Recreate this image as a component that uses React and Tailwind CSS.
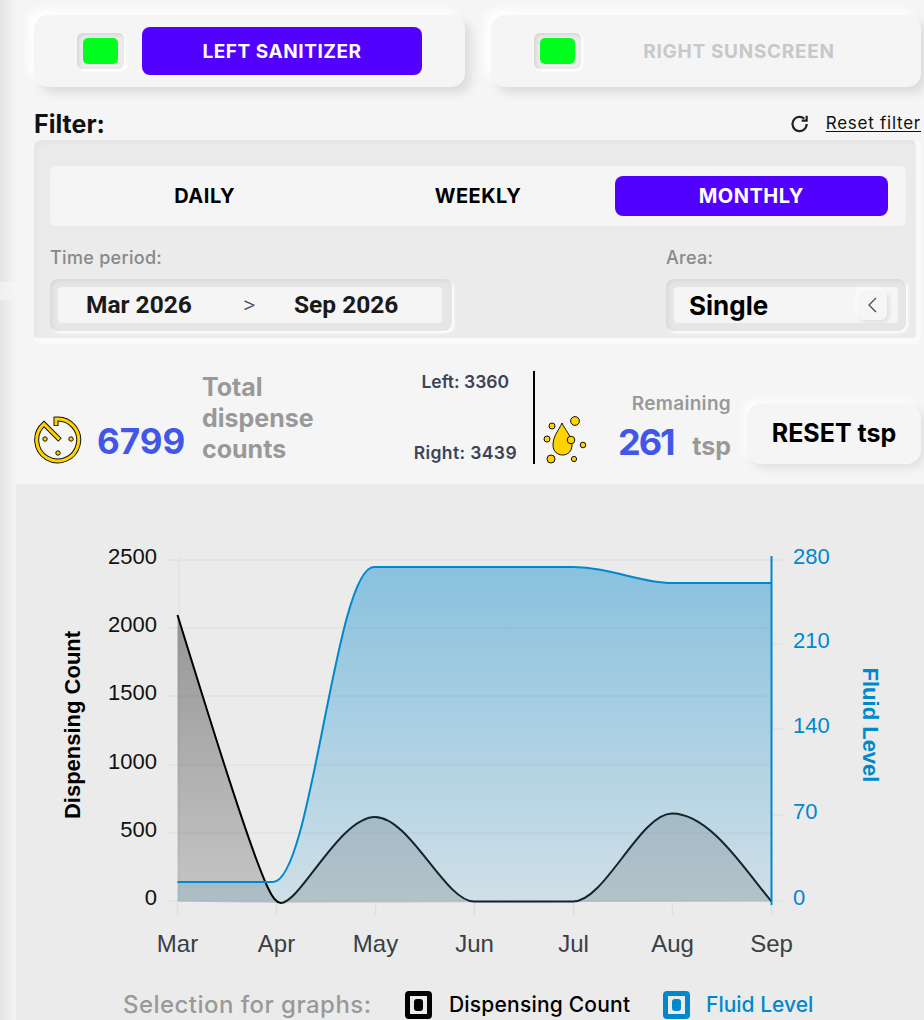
import React from 'react';

const mont = "font-['Inter','Liberation_Sans',sans-serif]";

const leftTicks = [['2500', 560], ['2000', 628], ['1500', 696], ['1000', 765], ['500', 833], ['0', 901]];
const rightTicks = [['280', 560], ['210', 644], ['140', 729], ['70', 815], ['0', 901]];
const months = ['Mar', 'Apr', 'May', 'Jun', 'Jul', 'Aug', 'Sep'];

const blueLine = 'M177.5 882 L273 882 C312 882 335 567 374 567 L573 567 C610 567 640 583 672 583 L771.5 583';
const dropLine = 'M177.5 615 C210 720 250 850 268 888 C273 899 277 903 281 903';
const humpLine = 'M281 903 C300 903 340 817 375 817 C410 817 445 901.5 474 901.5 L573 901.5 C605 901.5 640 813.5 672 813.5 C710 813.5 745 870 771.5 901.5';

function Chart() {
  return (
    <svg width="908" height="490" viewBox="16 484 908 490" className="block">
      <defs>
        <linearGradient id="blueFill" x1="0" y1="567" x2="0" y2="901" gradientUnits="userSpaceOnUse">
          <stop offset="0" stopColor="#0088cc" stopOpacity="0.42" />
          <stop offset="1" stopColor="#0088cc" stopOpacity="0.12" />
        </linearGradient>
        <linearGradient id="blackFill" x1="0" y1="615" x2="0" y2="901" gradientUnits="userSpaceOnUse">
          <stop offset="0" stopColor="#000000" stopOpacity="0.36" />
          <stop offset="1" stopColor="#000000" stopOpacity="0.16" />
        </linearGradient>
      </defs>

      {leftTicks.map(([label, y]) => (
        <g key={label}>
          <line x1="168" x2="771" y1={y} y2={y} stroke="#e2e2e2" strokeWidth="1.5" />
          <text x="157" y={y + 4} textAnchor="end" fontSize="22" fill="#111" fontFamily="Liberation Sans">{label}</text>
        </g>
      ))}
      <line x1="179" x2="179" y1="556" y2="902" stroke="#e2e2e2" strokeWidth="1.5" />
      {months.map((m, i) => (
        <g key={m}>
          <line x1={177.5 + i * 99} x2={177.5 + i * 99} y1="903" y2="915" stroke="#dedede" strokeWidth="1.5" />
          <text x={177.5 + i * 99} y="952" textAnchor="middle" fontSize="24" fill="#3a3f42" fontFamily="Liberation Sans">{m}</text>
        </g>
      ))}

      <path d={`${dropLine} L177.5 901.5 Z`} fill="url(#blackFill)" />
      <path d={`${blueLine} L771.5 901.5 L177.5 901.5 Z`} fill="url(#blueFill)" />
      <path d={`${humpLine} Z`} fill="#000000" fillOpacity="0.13" />
      <path d={dropLine} fill="none" stroke="#000000" strokeWidth="2" />
      <path d={humpLine} fill="none" stroke="#14232c" strokeWidth="2" />
      <path d={blueLine} fill="none" stroke="#0088cc" strokeWidth="2" />

      <line x1="771.5" x2="771.5" y1="556" y2="905" stroke="#0088cc" strokeWidth="2" />
      {rightTicks.map(([label, y]) => (
        <g key={label}>
          <line x1="773" x2="783" y1={y} y2={y} stroke="#e2e2e2" strokeWidth="1.5" />
          <text x="793" y={y + 4} fontSize="22" fill="#0088cc" fontFamily="Liberation Sans">{label}</text>
        </g>
      ))}

      <text transform="translate(80 725) rotate(-90)" textAnchor="middle" fontSize="22" fontWeight="700" fill="#000" fontFamily="Liberation Sans">Dispensing Count</text>
      <text transform="translate(863 725) rotate(90)" textAnchor="middle" fontSize="22" fontWeight="700" fill="#0088cc" fontFamily="Liberation Sans">Fluid Level</text>
    </svg>
  );
}

function DialIcon() {
  const arc = 'M22 10 L22 3 A21 21 0 1 1 10 8 L26 24';
  return (
    <svg width="48" height="48" viewBox="0 0 48 48" fill="none">
      <path d={arc} stroke="#111" strokeWidth="5" />
      <path d="M22 9.2 L22 3 A21 21 0 1 1 10 8 L25.4 23.4" stroke="#ffd200" strokeWidth="3" />
      <circle cx="11" cy="23" r="2.2" fill="#ffd200" stroke="#111" strokeWidth="1" />
      <circle cx="37" cy="23" r="2.2" fill="#ffd200" stroke="#111" strokeWidth="1" />
      <circle cx="24" cy="37" r="2.2" fill="#ffd200" stroke="#111" strokeWidth="1" />
    </svg>
  );
}

function DropIcon() {
  return (
    <svg width="44" height="48" viewBox="0 0 44 48" fill="none" stroke="#111" strokeWidth="1">
      <path d="M19 7 C16 14 10 20 10 29 C10 35 14 39 19.5 39 C25 39 29 35 29 29 C29 20 22 14 19 7 Z" fill="#ffd200" />
      <circle cx="32" cy="5" r="4.4" fill="#ffd200" />
      <circle cx="9" cy="10" r="3" fill="#ffd200" />
      <circle cx="4" cy="23" r="3" fill="#ffd200" />
      <circle cx="28" cy="24" r="3.8" fill="#ffd200" />
      <circle cx="40" cy="29" r="2.8" fill="#ffd200" />
      <circle cx="8" cy="43" r="4" fill="#ffd200" />
      <circle cx="31" cy="43" r="2.6" fill="#ffd200" />
    </svg>
  );
}

function Lamp() {
  return (
    <div className="flex h-[36px] w-[47px] items-center justify-center rounded-[6px] bg-[#ececec] shadow-[inset_2px_2px_4px_#d4d4d4,2px_2px_4px_#ffffff]">
      <div className="h-[26px] w-[35px] rounded-[5px] bg-[#00ff1e]" />
    </div>
  );
}

function LegendBox({ color }) {
  return (
    <div className="flex h-[28px] w-[27px] items-center justify-center rounded-[4px] border-[5px] bg-[#ebebeb]" style={{ borderColor: color }}>
      <div className="h-[12px] w-[9px] rounded-[3px]" style={{ background: color }} />
    </div>
  );
}

export default function App() {
  return (
    <div className={`flex h-[1020px] w-[924px] overflow-hidden bg-[#f5f5f5] ${mont}`}>
      <div className="flex w-[16px] shrink-0 flex-col">
        <div className="h-[282px] bg-gradient-to-r from-[#e4e4e4] to-[#f5f5f5]" />
        <div className="h-[18px] bg-gradient-to-r from-[#f0f0f0] to-[#f5f5f5]" />
        <div className="flex-1 bg-gradient-to-r from-[#e4e4e4] to-[#f5f5f5]" />
      </div>

      <div className="flex min-w-0 flex-1 flex-col">
        <div className="flex gap-[26px] pl-[18px] pr-[3px] pt-[15px]">
          <div className="flex h-[72px] w-[431px] items-center rounded-[14px] bg-[#f5f5f5] pl-[43px] shadow-[6px_6px_10px_#dcdcdc,-6px_-6px_10px_#ffffff]">
            <Lamp />
            <button className="ml-[18px] h-[48px] w-[280px] rounded-[8px] bg-[#5200ff] pt-[2px] text-[19px] font-bold tracking-[0.55px] text-white">LEFT SANITIZER</button>
          </div>
          <div className="flex h-[72px] w-[430px] items-center rounded-[14px] bg-[#f5f5f5] pl-[43px] shadow-[6px_6px_10px_#dcdcdc,-6px_-6px_10px_#ffffff]">
            <Lamp />
            <button className="ml-[18px] h-[48px] w-[280px] rounded-[8px] pt-[2px] text-[19px] font-bold tracking-[0.7px] text-[#c8c8c8]">RIGHT SUNSCREEN</button>
          </div>
        </div>

        <div className="mt-[21px] flex h-[32px] items-center justify-between pl-[18px] pr-[3px]">
          <span className="translate-y-[1px] text-[25px] font-bold text-[#111]">Filter:</span>
          <div className="flex items-center gap-[16px]">
            <svg width="20" height="20" viewBox="0 0 24 24" fill="none" stroke="#222" strokeWidth="2.6">
              <path d="M20 12 A8.5 8.5 0 1 1 17 5.5" />
              <path d="M20 2 V8 H14" />
            </svg>
            <span className="text-[17px] tracking-[0.75px] text-[#111] underline underline-offset-2">Reset filter</span>
          </div>
        </div>

        <div className="ml-[18px] mr-[3px] h-[204px] rounded-[8px] border-b-[6px] border-r-[5px] border-[#fafafa] bg-[#ebebeb] pl-[16px] pr-[10px] shadow-[inset_4px_4px_2px_#e6e6e6]">
          <div className="mt-[26px] flex h-[60px] items-center rounded-[6px] bg-[#f5f5f5] px-[18px]">
            <div className="flex-1 text-center text-[20px] font-bold tracking-[0.5px] text-black">DAILY</div>
            <div className="flex-1 text-center text-[20px] font-bold tracking-[0.5px] text-black">WEEKLY</div>
            <div className="flex h-[40px] flex-1 items-center justify-center rounded-[8px] bg-[#5200ff] text-[20px] font-bold tracking-[0.5px] text-white">MONTHLY</div>
          </div>
          <div className="mt-[20px] flex justify-between">
            <div>
              <div className="text-[18px] font-medium leading-[24px] tracking-[0.3px] text-[#888]">Time period:</div>
              <div className="mt-[9px] flex h-[52px] w-[402px] items-center rounded-[8px] bg-[#e6e6e6] pl-[8px] pr-[10px] shadow-[inset_2px_2px_4px_#d8d8d8,2px_2px_3px_#ffffff]">
                <div className="flex h-[36px] flex-1 items-center rounded-[4px] bg-[#f5f5f5] pl-[28px] font-['Roboto',sans-serif] text-[24.5px] font-bold text-[#1a1a1a]">
                  <span className="w-[157px]">Mar 2026</span>
                  <span className="w-[51px] text-[24px] font-light text-[#3a4458]">&gt;</span>
                  <span>Sep 2026</span>
                </div>
              </div>
            </div>
            <div>
              <div className="text-[18px] font-medium leading-[24px] tracking-[0.3px] text-[#888]">Area:</div>
              <div className="mt-[9px] flex h-[52px] w-[240px] items-center rounded-[8px] bg-[#e6e6e6] px-[8px] shadow-[inset_2px_2px_4px_#d8d8d8,2px_2px_3px_#ffffff]">
                <div className="flex h-[36px] flex-1 items-center justify-between rounded-[4px] bg-[#f5f5f5] pl-[15px] pr-[11px] text-[26px] font-bold text-black">
                  <span>Single</span>
                  <div className="flex h-[29px] w-[29px] items-center justify-center rounded-[6px] bg-[#f5f5f5] shadow-[2px_2px_4px_#dcdcdc,-2px_-2px_4px_#ffffff]">
                    <svg width="14" height="16" viewBox="0 0 14 16" fill="none" stroke="#555" strokeWidth="1.4"><path d="M10 1 L3 8 L10 15" /></svg>
                  </div>
                </div>
              </div>
            </div>
          </div>
        </div>

        <div className="flex h-[140px] pl-[18px]">
          <div className="mt-[72px] h-[48px] w-[48px] shrink-0"><DialIcon /></div>
          <div className="ml-[15px] mt-[75px] w-[88px] shrink-0 text-[35px] font-bold leading-[44px] text-[#4257ea]">6799</div>
          <div className="ml-[17px] mt-[28px] w-[128px] shrink-0 text-[25px] font-bold leading-[31px] text-[#999]">Total dispense counts</div>
          <div className="flex h-[93px] w-[203px] shrink-0 flex-col items-end justify-between pt-[27px] text-[17.5px] font-semibold leading-[22px] text-[#3a4458]">
            <span className="mr-[24px]">Left: 3360</span>
            <span className="mr-[16px] -mb-[27px] tracking-[0.4px]">Right: 3439</span>
          </div>
          <div className="mt-[27px] h-[93px] w-[2px] shrink-0 bg-black" />
          <div className="ml-[8px] mt-[72px] h-[48px] w-[44px] shrink-0"><DropIcon /></div>
          <div className="ml-[31px] mt-[48px] flex w-[113px] shrink-0 flex-col">
            <span className="text-right text-[19px] font-semibold leading-[24px] tracking-[0.3px] text-[#999]">Remaining</span>
            <div className="mt-[4px] flex items-baseline justify-between">
              <span className="text-[36px] font-bold leading-[44px] tracking-[-2px] text-[#4257ea]">261</span>
              <span className="text-[25px] font-bold leading-[30px] text-[#999]">tsp</span>
            </div>
          </div>
          <button className="ml-[16px] mt-[60px] h-[60px] w-[174px] rounded-[14px] bg-[#f5f5f5] text-[25px] font-bold text-black shadow-[4px_4px_8px_#e0e0e0,-4px_-4px_8px_#ffffff]">RESET tsp</button>
        </div>

        <div className="flex-1 bg-[#ebebeb]">
          <Chart />
          <div className="flex items-center pl-[107px] pt-[17px]">
            <span className="w-[282px] text-[24px] font-medium leading-[28px] tracking-[0.45px] text-[#999]">Selection for graphs:</span>
            <LegendBox color="#000000" />
            <span className="ml-[17px] w-[214px] text-[21px] font-medium leading-[28px] tracking-[0.2px] text-black">Dispensing Count</span>
            <LegendBox color="#0088cc" />
            <span className="ml-[16px] text-[21px] font-medium leading-[28px] text-[#0088cc]">Fluid Level</span>
          </div>
        </div>
      </div>
    </div>
  );
}
